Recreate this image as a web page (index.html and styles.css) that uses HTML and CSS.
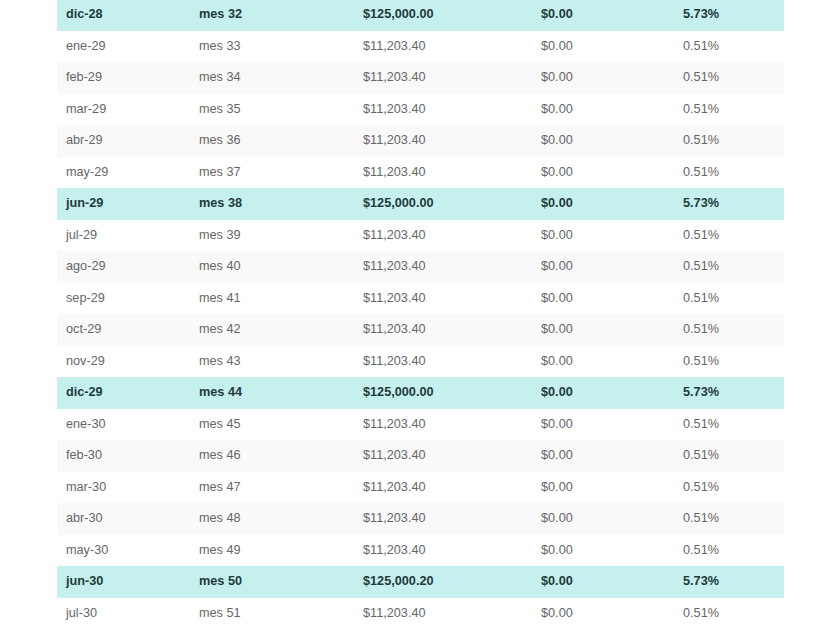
FILE: index.html
```html
<!DOCTYPE html>
<html lang="es">
<head>
<meta charset="utf-8">
<title>Tabla de pagos</title>
<link rel="stylesheet" href="styles.css">
</head>
<body>
<table class="schedule">
<colgroup>
<col class="c1"><col class="c2"><col class="c3"><col class="c4"><col class="c5">
</colgroup>
<tbody>
<tr class="hl"><td>dic-28</td><td>mes 32</td><td>$125,000.00</td><td>$0.00</td><td>5.73%</td></tr>
<tr><td>ene-29</td><td>mes 33</td><td>$11,203.40</td><td>$0.00</td><td>0.51%</td></tr>
<tr><td>feb-29</td><td>mes 34</td><td>$11,203.40</td><td>$0.00</td><td>0.51%</td></tr>
<tr><td>mar-29</td><td>mes 35</td><td>$11,203.40</td><td>$0.00</td><td>0.51%</td></tr>
<tr><td>abr-29</td><td>mes 36</td><td>$11,203.40</td><td>$0.00</td><td>0.51%</td></tr>
<tr><td>may-29</td><td>mes 37</td><td>$11,203.40</td><td>$0.00</td><td>0.51%</td></tr>
<tr class="hl"><td>jun-29</td><td>mes 38</td><td>$125,000.00</td><td>$0.00</td><td>5.73%</td></tr>
<tr><td>jul-29</td><td>mes 39</td><td>$11,203.40</td><td>$0.00</td><td>0.51%</td></tr>
<tr><td>ago-29</td><td>mes 40</td><td>$11,203.40</td><td>$0.00</td><td>0.51%</td></tr>
<tr><td>sep-29</td><td>mes 41</td><td>$11,203.40</td><td>$0.00</td><td>0.51%</td></tr>
<tr><td>oct-29</td><td>mes 42</td><td>$11,203.40</td><td>$0.00</td><td>0.51%</td></tr>
<tr><td>nov-29</td><td>mes 43</td><td>$11,203.40</td><td>$0.00</td><td>0.51%</td></tr>
<tr class="hl"><td>dic-29</td><td>mes 44</td><td>$125,000.00</td><td>$0.00</td><td>5.73%</td></tr>
<tr><td>ene-30</td><td>mes 45</td><td>$11,203.40</td><td>$0.00</td><td>0.51%</td></tr>
<tr><td>feb-30</td><td>mes 46</td><td>$11,203.40</td><td>$0.00</td><td>0.51%</td></tr>
<tr><td>mar-30</td><td>mes 47</td><td>$11,203.40</td><td>$0.00</td><td>0.51%</td></tr>
<tr><td>abr-30</td><td>mes 48</td><td>$11,203.40</td><td>$0.00</td><td>0.51%</td></tr>
<tr><td>may-30</td><td>mes 49</td><td>$11,203.40</td><td>$0.00</td><td>0.51%</td></tr>
<tr class="hl"><td>jun-30</td><td>mes 50</td><td>$125,000.20</td><td>$0.00</td><td>5.73%</td></tr>
<tr><td>jul-30</td><td>mes 51</td><td>$11,203.40</td><td>$0.00</td><td>0.51%</td></tr>
</tbody>
</table>
</body>
</html>
```

FILE: styles.css
```css
html, body {
  margin: 0;
  padding: 0;
  background: #ffffff;
  overflow: hidden;
}

body {
  font-family: "Liberation Sans", Arial, sans-serif;
  font-size: 12.7px;
  color: #666666;
}

.schedule {
  border-collapse: collapse;
  table-layout: fixed;
  width: 727px;
  margin: -1px 0 0 57px;
}

.schedule .c1 { width: 133px; }
.schedule .c2 { width: 164px; }
.schedule .c3 { width: 178px; }
.schedule .c4 { width: 142px; }
.schedule .c5 { width: 110px; }

.schedule td {
  height: 31.5px;
  padding: 0 0 0 9px;
  box-sizing: border-box;
  vertical-align: middle;
  white-space: nowrap;
  line-height: 1;
}

.schedule tr:nth-child(odd) {
  background: #f9f9f9;
}

.schedule tr.hl {
  background: #c6f0ee;
  color: #1d3b3b;
  font-weight: bold;
}
```
